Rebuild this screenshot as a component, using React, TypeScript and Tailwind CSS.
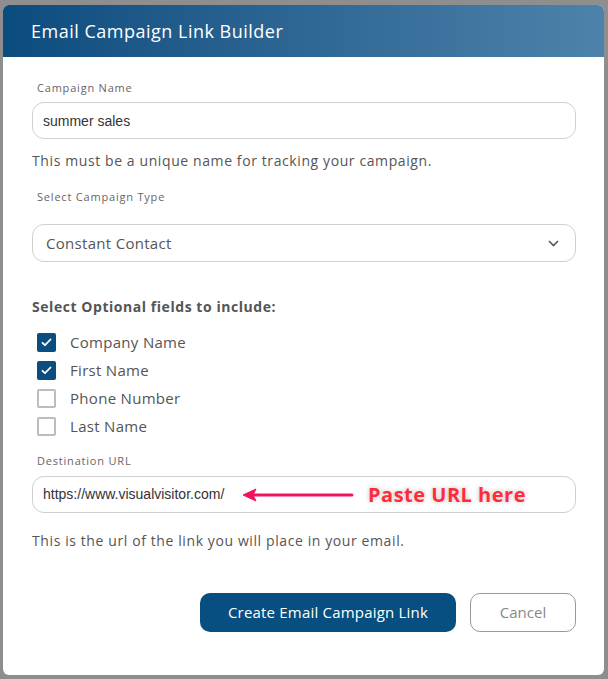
import React from "react";

const font = { fontFamily: '"Open Sans", "Noto Sans", sans-serif' };

function Check({ checked, label }: { checked: boolean; label: string }) {
  return (
    <div className="flex items-center h-[28px]">
      <div
        className={
          checked
            ? "w-[19px] h-[19px] ml-[5px] rounded-[2px] bg-[#0a4d80] flex items-center justify-center"
            : "w-[19px] h-[19px] ml-[5px] rounded-[2px] border-2 border-[#bdbdbd] bg-white"
        }
      >
        {checked && (
          <svg width="11" height="9" viewBox="0 0 11 9">
            <path d="M1.5 4.8 L4 7.2 L9.5 1.5" stroke="white" strokeWidth="1.8" fill="none" strokeLinecap="round" strokeLinejoin="round" />
          </svg>
        )}
      </div>
      <span className="ml-[14px] text-[15px] text-[#555] tracking-[0.3px]">{label}</span>
    </div>
  );
}

export default function App() {
  return (
    <div className="w-[608px] h-[679px] bg-[#8e8e8e] pt-[5px] pl-[3px]" style={font}>
      <div className="w-[601px] h-[670px] bg-white rounded-[6px] overflow-hidden flex flex-col">
        <div className="h-[52px] bg-gradient-to-r from-[#0a4c7e] to-[#4d82aa] flex items-center pl-[28px]">
          <span className="text-white text-[18px] font-medium tracking-[0.5px]">Email Campaign Link Builder</span>
        </div>
        <div className="pl-[29px] pr-[28px] flex flex-col">
          <div className="mt-[23px] ml-[5px] text-[11px] text-[#666] h-[15px] leading-[15px] tracking-[0.8px]">Campaign Name</div>
          <div className="mt-[7px] h-[37px] border border-[#cfcfcf] rounded-[12px] flex items-center pl-[10px] pt-[2px]">
            <span className="text-[14px] text-[#333]" style={{ fontFamily: '"Liberation Sans", Arial, sans-serif' }}>summer sales</span>
          </div>
          <div className="mt-[12px] text-[14px] text-[#555] h-[20px] leading-[20px] tracking-[0.6px]">This must be a unique name for tracking your campaign.</div>
          <div className="mt-[18px] ml-[5px] text-[11px] text-[#666] h-[15px] leading-[15px] tracking-[0.8px]">Select Campaign Type</div>
          <div className="mt-[20px] h-[38px] border border-[#cfcfcf] rounded-[12px] flex items-center pl-[13px] pr-[16px] justify-between">
            <span className="text-[15px] text-[#555] tracking-[0.3px]">Constant Contact</span>
            <svg width="11" height="7" viewBox="0 0 11 7">
              <path d="M1 1 L5.5 5.5 L10 1" stroke="#555" strokeWidth="1.6" fill="none" />
            </svg>
          </div>
          <div className="mt-[35px] text-[14px] font-bold text-[#555] h-[20px] leading-[20px] tracking-[0.55px]">Select Optional fields to include:</div>
          <div className="mt-[11px] flex flex-col">
            <Check checked label="Company Name" />
            <Check checked label="First Name" />
            <Check checked={false} label="Phone Number" />
            <Check checked={false} label="Last Name" />
          </div>
          <div className="mt-[13px] ml-[5px] text-[11px] text-[#666] h-[15px] leading-[15px] tracking-[0.8px]">Destination URL</div>
          <div className="mt-[8px] h-[37px] border border-[#cfcfcf] rounded-[12px] flex items-center pl-[10px] relative">
            <span className="text-[14px] text-[#333]" style={{ fontFamily: '"Liberation Sans", Arial, sans-serif' }}>https://www.visualvisitor.com/</span>
            <svg className="absolute left-[209px] top-[9px]" width="112" height="18" viewBox="0 0 112 18">
              <path d="M110 9 L12 9" stroke="#f2145a" strokeWidth="3" strokeLinecap="round" />
              <path d="M1 9 L14 3 L11 9 L14 15 Z" fill="#f2145a" stroke="#f2145a" strokeWidth="1" strokeLinejoin="round" />
            </svg>
            <span
              className="absolute left-[335px] top-[3px] text-[20px] font-bold text-[#ff2b3b] tracking-[0.5px]"
              style={{ textShadow: "0 0 3px #fff, 0 0 4px rgba(0,0,0,0.35)" }}
            >
              Paste URL here
            </span>
          </div>
          <div className="mt-[18px] text-[14px] text-[#555] h-[20px] leading-[20px] tracking-[0.6px]">This is the url of the link you will place in your email.</div>
          <div className="mt-[42px] flex justify-end gap-[14px]">
            <button className="w-[256px] h-[39px] rounded-[10px] bg-[#074f80] text-white text-[15px] tracking-[0.2px]">Create Email Campaign Link</button>
            <button className="w-[106px] h-[39px] rounded-[10px] border border-[#999] text-[#888] text-[15px] bg-white">Cancel</button>
          </div>
        </div>
      </div>
    </div>
  );
}
